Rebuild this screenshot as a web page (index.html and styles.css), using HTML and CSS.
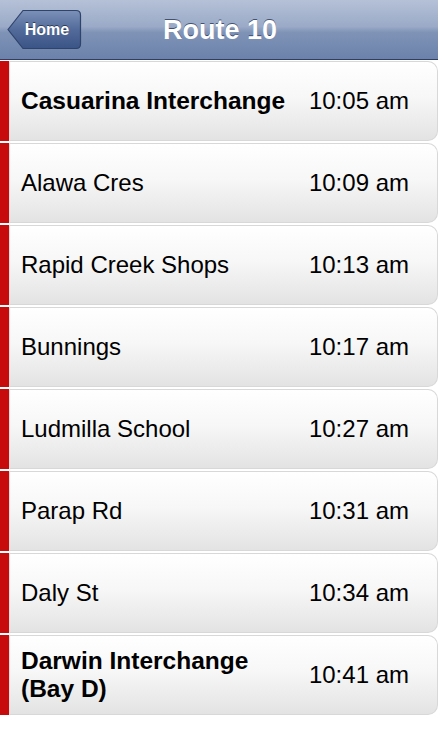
FILE: index.html
```html
<!DOCTYPE html>
<html>
<head>
<meta charset="utf-8">
<link rel="stylesheet" href="styles.css">
</head>
<body>
<div class="nav">
  <div class="back">
    <svg class="back-bg" width="75" height="41" viewBox="0 0 75 41">
      <defs>
        <linearGradient id="bg" x1="0" y1="0" x2="0" y2="1">
          <stop offset="0" stop-color="#7c91b8"/>
          <stop offset="0.5" stop-color="#526b9a"/>
          <stop offset="1" stop-color="#3b5487"/>
        </linearGradient>
      </defs>
      <path d="M1 20.5 L16 1.5 H69 Q73.5 1.5 73.5 6 V35 Q73.5 39.5 69 39.5 H16 Z" fill="url(#bg)" stroke="#2f436b" stroke-width="1.2"/>
    </svg>
    <span class="back-label">Home</span>
  </div>
  <div class="title">Route 10</div>
</div>
<div class="list">
  <div class="row"><div class="bar"></div><div class="card"><span class="stop bold">Casuarina Interchange</span><span class="time">10:05 am</span></div></div>
  <div class="row"><div class="bar"></div><div class="card"><span class="stop">Alawa Cres</span><span class="time">10:09 am</span></div></div>
  <div class="row"><div class="bar"></div><div class="card"><span class="stop">Rapid Creek Shops</span><span class="time">10:13 am</span></div></div>
  <div class="row"><div class="bar"></div><div class="card"><span class="stop">Bunnings</span><span class="time">10:17 am</span></div></div>
  <div class="row"><div class="bar"></div><div class="card"><span class="stop">Ludmilla School</span><span class="time">10:27 am</span></div></div>
  <div class="row"><div class="bar"></div><div class="card"><span class="stop">Parap Rd</span><span class="time">10:31 am</span></div></div>
  <div class="row"><div class="bar"></div><div class="card"><span class="stop">Daly St</span><span class="time">10:34 am</span></div></div>
  <div class="row"><div class="bar"></div><div class="card"><span class="stop bold">Darwin Interchange<br>(Bay D)</span><span class="time">10:41 am</span></div></div>
</div>
</body>
</html>
```
FILE: styles.css
```css
html, body {
  margin: 0;
  padding: 0;
  background: #ffffff;
  font-family: "Liberation Sans", Arial, sans-serif;
}
.nav {
  position: relative;
  height: 59px;
  background: linear-gradient(to bottom, #b5c1d7 0%, #9aaac7 45%, #7f93b7 55%, #6c82aa 100%);
  border-bottom: 1px solid #2e3f62;
  display: flex;
  align-items: center;
  justify-content: center;
}
.back {
  position: absolute;
  left: 7px;
  top: 9px;
  width: 75px;
  height: 41px;
  display: flex;
  align-items: center;
  justify-content: center;
}
.back-bg {
  position: absolute;
  left: 0;
  top: 0;
}
.back-label {
  position: relative;
  margin-left: 5px;
  color: #fff;
  font-weight: bold;
  font-size: 16px;
  text-shadow: 0 -1px 0 rgba(0,0,0,0.5);
}
.title {
  color: #fff;
  font-weight: bold;
  font-size: 27px;
  text-shadow: 0 -1px 0 rgba(40,55,90,0.8);
  margin-top: 1px;
  margin-left: 2px;
}
.list {
  padding-top: 1px;
  display: flex;
  flex-direction: column;
  gap: 2px;
}
.row {
  display: flex;
  height: 80px;
}
.bar {
  width: 9px;
  background: #c70a0c;
  border-right: 1px solid #f0dada;
}
.card {
  flex: 1;
  display: flex;
  align-items: center;
  justify-content: space-between;
  padding: 0 28px 0 11px;
  background: linear-gradient(to bottom, #ffffff 0%, #f7f7f7 45%, #e3e3e3 100%);
  border: 1px solid #d8d8d8;
  border-left: none;
  border-radius: 0 10px 10px 0;
}
.stop {
  font-size: 24px;
  color: #000;
  line-height: 28px;
}
.stop.bold {
  font-weight: bold;
  font-size: 24.5px;
}
.time {
  font-size: 24px;
  color: #000;
}
```
